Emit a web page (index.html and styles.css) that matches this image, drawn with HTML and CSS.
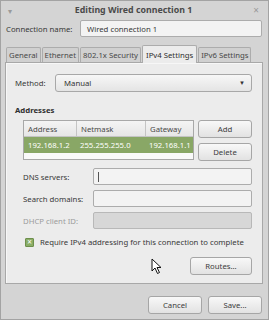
FILE: index.html
```html
<!DOCTYPE html>
<html>
<head>
<title>Editing Wired connection 1</title>
<link rel="stylesheet" href="styles.css">
</head>
<body>
<div class="window">
  <div class="titlebar">
    <span class="tb-menu">&#9662;</span>
    <span class="tb-title">Editing Wired connection 1</span>
    <span class="tb-close">&#215;</span>
  </div>

  <div class="name-row">
    <label class="lbl">Connection name:</label>
    <div class="entry name-entry">Wired connection 1</div>
  </div>

  <div class="notebook">
    <div class="tabs">
      <div class="tab">General</div>
      <div class="tab">Ethernet</div>
      <div class="tab">802.1x Security</div>
      <div class="tab active">IPv4 Settings</div>
      <div class="tab">IPv6 Settings</div>
    </div>
    <div class="page">
      <div class="method-row">
        <label class="lbl">Method:</label>
        <div class="combo"><span>Manual</span><span class="combo-arrow">&#9660;</span></div>
      </div>

      <div class="section-title">Addresses</div>
      <div class="addr-row">
        <div class="addr-table">
          <div class="tr head">
            <div class="c1">Address</div>
            <div class="c2">Netmask</div>
            <div class="c3">Gateway</div>
          </div>
          <div class="tr selected">
            <div class="c1">192.168.1.2</div>
            <div class="c2">255.255.255.0</div>
            <div class="c3">192.168.1.1</div>
          </div>
        </div>
        <div class="addr-buttons">
          <button class="btn">Add</button>
          <button class="btn">Delete</button>
        </div>
      </div>

      <div class="form">
        <label class="lbl">DNS servers:</label>
        <div class="entry"><span class="caret"></span></div>
        <label class="lbl">Search domains:</label>
        <div class="entry"></div>
        <label class="lbl disabled">DHCP client ID:</label>
        <div class="entry disabled"></div>
      </div>

      <div class="check-row">
        <span class="checkbox">&#215;</span>
        <span>Require IPv4 addressing for this connection to complete</span>
      </div>

      <div class="routes-row">
        <button class="btn routes">Routes...</button>
      </div>
    </div>
  </div>

  <div class="actions">
    <button class="btn">Cancel</button>
    <button class="btn">Save...</button>
  </div>

  <svg class="pointer" width="12" height="17" viewBox="0 0 12 17">
    <path d="M1 1 L1 13 L4 10 L6.5 15.5 L8.5 14.5 L6 9.5 L10 9.5 Z" fill="#fff" stroke="#111" stroke-width="1"/>
  </svg>
</div>
</body>
</html>
```

FILE: styles.css
```css
/* Network connection editor, IPv4 page */

body
{ margin: 0;
  background: #d3d3d3;
  font-family: "Noto Sans", "Open Sans", sans-serif;
  font-size: 7.75px;
  color: #383838;
}

.window
{ position: relative;
  width: 269px;
  height: 320px;
  box-sizing: border-box;
  border: 1px solid #a3a3a3;
  background: #d4d4d4;
}

/* Title bar */

.titlebar
{ display: flex;
  align-items: center;
  height: 18px;
  padding: 0 9px 0 7px;
  color: #4a4a4a;
}

.tb-menu
{ width: 10px;
  font-size: 8px;
  color: #9a9a9a;
}

.tb-title
{ flex: 1;
  text-align: center;
  font-weight: bold;
  font-size: 8.8px;
}

.tb-close
{ width: 10px;
  text-align: right;
  font-size: 10px;
  color: #9a9a9a;
}

/* Entries and labels */

.lbl
{ white-space: nowrap;
}

.lbl.disabled
{ color: #9c9c9c;
}

.entry
{ box-sizing: border-box;
  height: 17px;
  border: 1px solid #acacac;
  border-radius: 2px;
  background: #f3f3f3;
  padding: 0 8px;
  display: flex;
  align-items: center;
}

.entry.disabled
{ background: #d7d7d7;
  border-color: #b8b8b8;
}

.caret
{ width: 1px;
  height: 10px;
  background: #555;
  margin-left: -4px;
}

.name-row
{ display: flex;
  align-items: center;
  margin: 1px 6px 0 5px;
  height: 17px;
}

.name-row .lbl
{ width: 74px;
}

.name-entry
{ flex: 1;
  padding-left: 6px;
}

/* Notebook */

.notebook
{ margin: 8px 5px 0 4px;
}

.tabs
{ display: flex;
  align-items: flex-end;
  padding-left: 1px;
  height: 17px;
}

.tab
{ box-sizing: border-box;
  height: 15px;
  margin-right: 1px;
  padding: 0 2px;
  border: 1px solid #acacac;
  border-bottom: none;
  border-radius: 2px 2px 0 0;
  background: #d0d0d0;
  display: flex;
  align-items: center;
  color: #484848;
}

.tab.active
{ height: 18px;
  margin-bottom: -1px;
  background: #ececec;
  padding: 0 3px;
  color: #2f2f2f;
  position: relative;
}

.page
{ height: 222px;
  box-sizing: border-box;
  border: 1px solid #a8a8a8;
  box-shadow: inset 1px 1px 0 #f7f7f7;
  background: #ececec;
  padding: 11px 10px 0 9px;
}

.method-row
{ display: flex;
  align-items: center;
  height: 18px;
}

.method-row .lbl
{ width: 40px;
}

.combo
{ flex: 1;
  box-sizing: border-box;
  height: 18px;
  display: flex;
  align-items: center;
  justify-content: space-between;
  padding: 0 6px 0 8px;
  border: 1px solid #a8a8a8;
  border-radius: 3px;
  background: linear-gradient(#f7f7f7, #e4e4e4);
  color: #333;
}

.combo-arrow
{ font-size: 6px;
  color: #333;
}

.section-title
{ margin-top: 13px;
  font-weight: bold;
  color: #2f2f2f;
  height: 11px;
  line-height: 11px;
}

/* Address list */

.addr-row
{ display: flex;
  margin: 4px 0 0 8px;
  gap: 4px;
}

.addr-table
{ width: 173px;
  height: 40px;
  box-sizing: border-box;
  border: 1px solid #a8a8a8;
  background: #fafafa;
}

.tr
{ display: flex;
  height: 15px;
  align-items: center;
}

.tr.head
{ background: linear-gradient(#f4f4f4, #e6e6e6);
  border-bottom: 1px solid #c4c4c4;
  color: #4a4a4a;
}

.tr.head div + div
{ border-left: 1px solid #c4c4c4;
}

.tr.selected
{ height: 16px;
  background: #89a766;
  color: #fff;
}

.tr div
{ box-sizing: border-box;
  height: 100%;
  display: flex;
  align-items: center;
  padding-left: 4px;
}

.c1 { width: 52px; }
.c2 { width: 69px; }
.c3 { flex: 1; }

.addr-buttons
{ display: flex;
  flex-direction: column;
  gap: 5px;
}

.btn
{ box-sizing: border-box;
  height: 18px;
  width: 54px;
  padding: 0;
  border: 1px solid #a6a6a6;
  border-radius: 3px;
  background: linear-gradient(#f8f8f8, #e2e2e2);
  font: inherit;
  color: #3c3c3c;
}

/* DNS and friends */

.form
{ display: grid;
  grid-template-columns: 70px 1fr;
  row-gap: 5px;
  align-items: center;
  margin: 7px 0 0 8px;
}

.check-row
{ display: flex;
  align-items: center;
  margin: 8px 0 0 10px;
}

.checkbox
{ box-sizing: border-box;
  width: 9px;
  height: 9px;
  margin-right: 6px;
  border: 1px solid #6d8f4c;
  border-radius: 1px;
  background: #8aad66;
  color: #fff;
  font-size: 8px;
  line-height: 6px;
  text-align: center;
}

.routes-row
{ display: flex;
  justify-content: flex-end;
  margin-top: 10px;
}

.btn.routes
{ width: 62px;
}

/* Dialog buttons */

.actions
{ display: flex;
  justify-content: flex-end;
  gap: 6px;
  margin: 12px 6px 0 0;
}

.pointer
{ position: absolute;
  left: 150px;
  top: 257px;
}
```
